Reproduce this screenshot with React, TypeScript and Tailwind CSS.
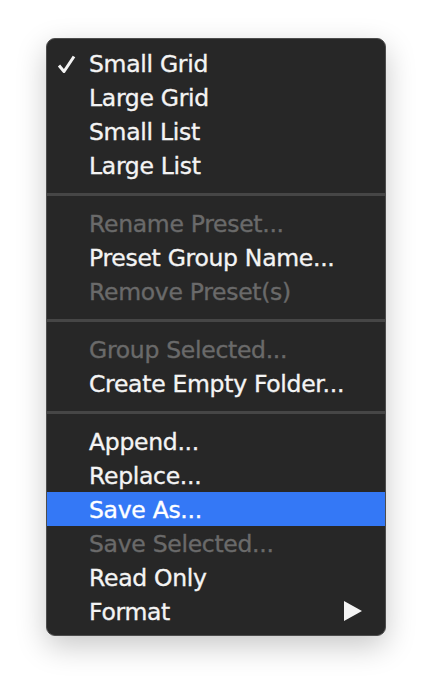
import React from "react";

type Item = { label: string; checked?: boolean; disabled?: boolean; active?: boolean; submenu?: boolean };

const groups: Item[][] = [
    [
        { label: "Small Grid", checked: true },
        { label: "Large Grid" },
        { label: "Small List" },
        { label: "Large List" },
    ],
    [
        { label: "Rename Preset...", disabled: true },
        { label: "Preset Group Name..." },
        { label: "Remove Preset(s)", disabled: true },
    ],
    [
        { label: "Group Selected...", disabled: true },
        { label: "Create Empty Folder..." },
    ],
    [
        { label: "Append..." },
        { label: "Replace..." },
        { label: "Save As...", active: true },
        { label: "Save Selected...", disabled: true },
        { label: "Read Only" },
        { label: "Format", submenu: true },
    ],
];

const Row = ({ item }: { item: Item }) => {
    // row colour depends on state: highlighted, greyed out or normal
    const tone = item.active
        ? "bg-[#3478f6] text-white"
        : item.disabled
        ? "text-[#6a6a6a]"
        : "text-[#f4f4f4]";

    return (
        <div className={`flex items-center h-[34px] pl-[42px] pr-[23px] pt-[3px] relative ${tone}`}>
            {item.checked && (
                <svg className="absolute left-[10px] top-[9px]" width="19" height="19" viewBox="0 0 19 19">
                    <path d="M2 10.5 L7 16.5 L17 1.5" fill="none" stroke="#f4f4f4" strokeWidth="3" strokeLinejoin="round" />
                </svg>
            )}
            <span className="flex-1 whitespace-nowrap [-webkit-text-stroke:0.35px_currentColor]">{item.label}</span>
            {item.submenu && (
                <svg className="-mt-[3px]" width="18" height="20" viewBox="0 0 18 20">
                    <polygon points="0,0 18,10 0,20" fill="#f4f4f4" />
                </svg>
            )}
        </div>
    );
};

const App = () => {
    return (
        <div className="w-[432px] h-[690px] bg-white flex justify-center pt-[38px]">
            <div
                className="w-[340px] h-[598px] bg-[#272727] rounded-[9px] border border-[#4d4d4d] py-[7px] shadow-[0_10px_30px_rgba(0,0,0,0.22)] overflow-hidden text-[23.5px] tracking-[-0.3px]"
                style={{ fontFamily: '"DejaVu Sans", Verdana, sans-serif' }}
            >
                {groups.map((group, gi) => (
                    <div key={gi}>
                        {gi > 0 && (
                            <div className="h-[24px] flex items-center">
                                <div className="w-full h-[3px] bg-[#464646]" />
                            </div>
                        )}
                        {group.map((item) => (
                            <Row key={item.label} item={item} />
                        ))}
                    </div>
                ))}
            </div>
        </div>
    );
};

export default App;
